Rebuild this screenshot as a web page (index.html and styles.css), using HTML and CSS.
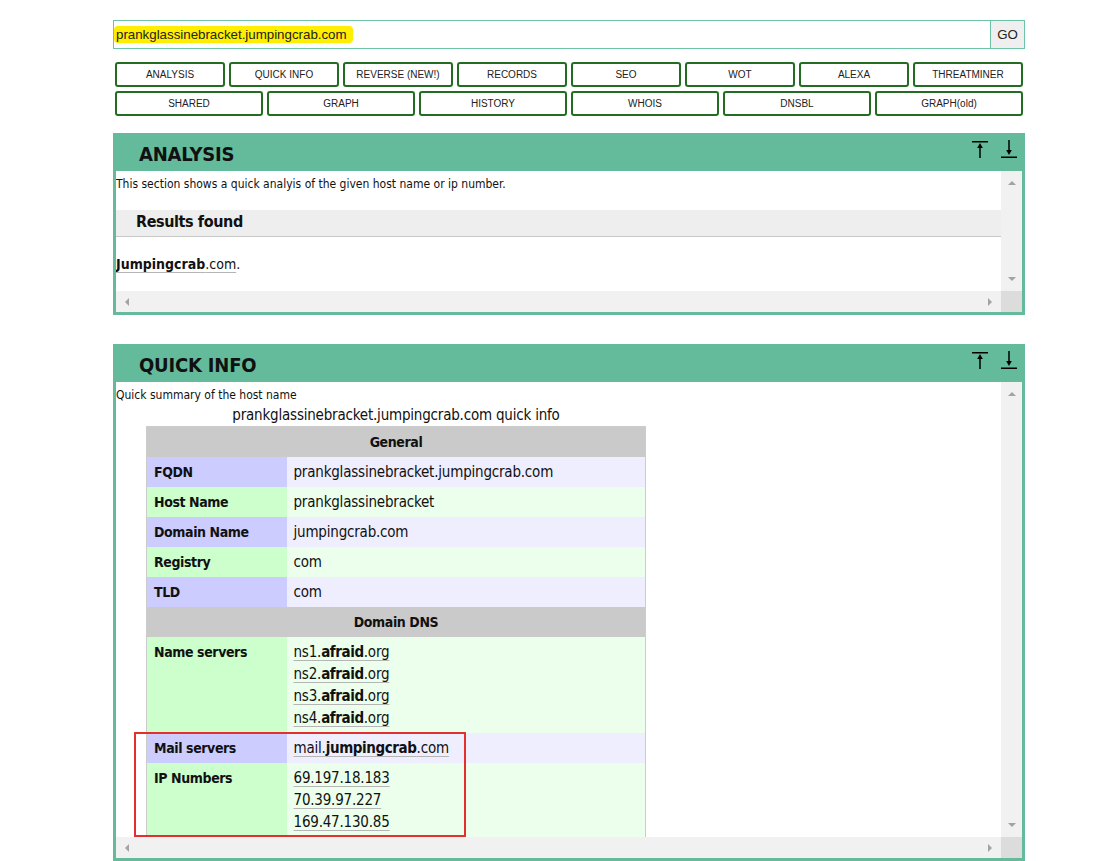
FILE: index.html
```html
<!DOCTYPE html>
<html lang="en">
<head>
<meta charset="utf-8">
<title>prankglassinebracket.jumpingcrab.com</title>
<link rel="stylesheet" href="styles.css">
</head>
<body>
<div class="page">
  <div class="search">
    <div class="search-field"><span class="hl">prankglassinebracket.jumpingcrab.com</span></div>
    <div class="go">GO</div>
  </div>
  <nav class="tabs tabs-8">
    <a class="tab">ANALYSIS</a>
    <a class="tab">QUICK INFO</a>
    <a class="tab">REVERSE (NEW!)</a>
    <a class="tab">RECORDS</a>
    <a class="tab">SEO</a>
    <a class="tab">WOT</a>
    <a class="tab">ALEXA</a>
    <a class="tab">THREATMINER</a>
  </nav>
  <nav class="tabs tabs-6">
    <a class="tab">SHARED</a>
    <a class="tab">GRAPH</a>
    <a class="tab">HISTORY</a>
    <a class="tab">WHOIS</a>
    <a class="tab">DNSBL</a>
    <a class="tab">GRAPH(old)</a>
  </nav>

  <section class="panel panel-analysis">
    <header class="panel-head">
      <h2 class="panel-title">ANALYSIS</h2>
      <div class="tools">
        <svg class="ico" width="16" height="18" viewBox="0 0 16 18"><rect x="0" y="1" width="16" height="1.5" fill="#000"/><polygon points="8,3 5.2,8 10.8,8" fill="#000"/><rect x="7.25" y="6" width="1.5" height="12" fill="#000"/></svg>
        <svg class="ico" width="16" height="18" viewBox="0 0 16 18"><rect x="7.25" y="0" width="1.5" height="12" fill="#000"/><polygon points="8,15 5.2,10 10.8,10" fill="#000"/><rect x="0" y="16.5" width="16" height="1.5" fill="#000"/></svg>
      </div>
    </header>
    <div class="panel-body">
      <div class="panel-content">
        <p class="desc">This section shows a quick analyis of the given host name or ip number.</p>
        <h3 class="band">Results found</h3>
        <p class="result"><a class="lnk"><b>Jumpingcrab</b>.com</a>.</p>
      </div>
      <div class="vscroll"><span class="arr arr-up"></span><span class="arr arr-down"></span></div>
      <div class="hscroll"><span class="arr arr-left"></span><span class="arr arr-right"></span></div>
      <div class="corner"></div>
    </div>
  </section>

  <section class="panel panel-quick">
    <header class="panel-head">
      <h2 class="panel-title">QUICK INFO</h2>
      <div class="tools">
        <svg class="ico" width="16" height="18" viewBox="0 0 16 18"><rect x="0" y="1" width="16" height="1.5" fill="#000"/><polygon points="8,3 5.2,8 10.8,8" fill="#000"/><rect x="7.25" y="6" width="1.5" height="12" fill="#000"/></svg>
        <svg class="ico" width="16" height="18" viewBox="0 0 16 18"><rect x="7.25" y="0" width="1.5" height="12" fill="#000"/><polygon points="8,15 5.2,10 10.8,10" fill="#000"/><rect x="0" y="16.5" width="16" height="1.5" fill="#000"/></svg>
      </div>
    </header>
    <div class="panel-body">
      <div class="panel-content">
        <p class="desc">Quick summary of the host name</p>
        <table class="qi">
          <caption>prankglassinebracket.jumpingcrab.com quick info</caption>
          <colgroup><col class="c-label"><col class="c-value"></colgroup>
          <tr><th colspan="2" class="grp">General</th></tr>
          <tr class="pu"><th>FQDN</th><td>prankglassinebracket.jumpingcrab.com</td></tr>
          <tr class="gr"><th>Host Name</th><td>prankglassinebracket</td></tr>
          <tr class="pu"><th>Domain Name</th><td>jumpingcrab.com</td></tr>
          <tr class="gr"><th>Registry</th><td>com</td></tr>
          <tr class="pu"><th>TLD</th><td>com</td></tr>
          <tr><th colspan="2" class="grp">Domain DNS</th></tr>
          <tr class="gr"><th>Name servers</th><td><a class="lnk">ns1.<b>afraid</b>.org</a><br><a class="lnk">ns2.<b>afraid</b>.org</a><br><a class="lnk">ns3.<b>afraid</b>.org</a><br><a class="lnk">ns4.<b>afraid</b>.org</a></td></tr>
          <tr class="pu"><th>Mail servers</th><td><a class="lnk">mail.<b>jumpingcrab</b>.com</a></td></tr>
          <tr class="gr"><th>IP Numbers</th><td><a class="lnk">69.197.18.183</a><br><a class="lnk">70.39.97.227</a><br><a class="lnk">169.47.130.85</a><br><a class="lnk">&nbsp;</a></td></tr>
        </table>
        <div class="annot"></div>
      </div>
      <div class="vscroll"><span class="arr arr-up"></span><span class="arr arr-down"></span></div>
      <div class="hscroll"><span class="arr arr-left"></span><span class="arr arr-right"></span></div>
      <div class="corner"></div>
    </div>
  </section>
</div>
</body>
</html>
```

FILE: styles.css
```css
* { box-sizing: border-box; }

html, body {
  margin: 0;
  padding: 0;
  background: #fff;
  overflow: hidden;
}

body {
  font-family: "DejaVu Sans Condensed", "DejaVu Sans", sans-serif;
  font-stretch: condensed;
  color: #111;
}

.page {
  width: 912px;
  margin-left: 113px;
  padding-top: 20px;
}

/* search bar */
.search {
  display: flex;
  height: 29px;
  border: 1px solid #6dc3a3;
}

.search-field {
  flex: 1;
  display: flex;
  align-items: center;
  font: 13.3px "Liberation Sans", Arial, sans-serif;
  color: #222;
}

.hl {
  background: #ffee00;
  border-radius: 4px;
  padding: 2px 6px 2px 2px;
  line-height: 13px;
}

.go {
  width: 34px;
  border-left: 1px solid #6dc3a3;
  background: #efefef;
  display: flex;
  align-items: center;
  justify-content: center;
  font: 13.3px "Liberation Sans", Arial, sans-serif;
  color: #222;
}

/* tab buttons */
.tabs {
  display: grid;
  gap: 4px;
  padding: 0 2px;
}

.tabs-8 {
  grid-template-columns: repeat(8, 1fr);
  margin-top: 13px;
}

.tabs-6 {
  grid-template-columns: repeat(6, 1fr);
  margin-top: 4px;
}

.tab {
  height: 25px;
  border: 2px solid #236d23;
  border-radius: 3px;
  background: #fff;
  display: flex;
  align-items: center;
  justify-content: center;
  font: 10px "Liberation Sans", Arial, sans-serif;
  color: #222;
  text-decoration: none;
}

/* panels */
.panel {
  border: 3px solid #63bb9b;
}

.panel-analysis { margin-top: 17px; }
.panel-quick { margin-top: 29px; }

.panel-head {
  height: 35px;
  background: #63bb9b;
  display: flex;
  align-items: center;
  padding: 0 5px 0 23px;
}

.panel-title {
  margin: 0;
  font-size: 20px;
  line-height: 24px;
  font-weight: bold;
  letter-spacing: -0.2px;
  color: #111;
}

.tools {
  margin-left: auto;
  align-self: flex-start;
  margin-top: 4px;
  display: flex;
  gap: 13px;
}

.ico { display: block; }

.panel-body {
  display: grid;
  grid-template-columns: 1fr 21px;
}

.panel-analysis .panel-body { grid-template-rows: 120px 21px; }
.panel-quick .panel-body { grid-template-rows: 455px 21px; }

.panel-content {
  position: relative;
  overflow: hidden;
  background: #fff;
}

.vscroll {
  background: #f1f1f1;
  display: flex;
  flex-direction: column;
  justify-content: space-between;
  align-items: center;
  padding: 10px 0;
}

.hscroll {
  background: #f1f1f1;
  display: flex;
  justify-content: space-between;
  align-items: center;
  padding: 0 9px;
}

.corner { background: #dcdcdc; }

.arr { width: 0; height: 0; display: block; }
.arr-up { border-left: 4px solid transparent; border-right: 4px solid transparent; border-bottom: 4px solid #a3a3a3; }
.arr-down { border-left: 4px solid transparent; border-right: 4px solid transparent; border-top: 4px solid #a3a3a3; }
.arr-left { border-top: 4px solid transparent; border-bottom: 4px solid transparent; border-right: 4px solid #a3a3a3; }
.arr-right { border-top: 4px solid transparent; border-bottom: 4px solid transparent; border-left: 4px solid #a3a3a3; }

/* content */
.desc {
  margin: 0;
  padding-top: 4px;
  font-size: 12px;
  line-height: 18px;
}

.band {
  margin: 17px 0 0;
  height: 27px;
  background: #eeeeee;
  border-bottom: 1px solid #c8c8c8;
  padding-left: 20px;
  font-size: 16px;
  line-height: 24px;
  font-weight: bold;
  letter-spacing: -0.4px;
}

.result {
  margin: 17px 0 0;
  font-size: 14px;
  line-height: 20px;
}

.lnk {
  color: inherit;
  text-decoration: underline;
  text-decoration-color: #b5b5b5;
  text-decoration-thickness: 1px;
  text-underline-offset: 3px;
  text-decoration-skip-ink: none;
}

/* quick info table */
.qi {
  margin-left: 30px;
  width: 500px;
  border-collapse: collapse;
  table-layout: fixed;
  border: 1px solid #cccccc;
  font-size: 15px;
  line-height: 22px;
  letter-spacing: -0.2px;
}

.qi caption {
  caption-side: top;
  text-align: center;
  font-size: 15px;
  line-height: 22px;
}

.c-label { width: 140px; }

.qi th, .qi td {
  padding: 4px 7px;
  vertical-align: top;
  text-align: left;
}

.qi th {
  font-weight: bold;
  font-size: 14px;
  letter-spacing: -0.4px;
}

.qi td b { letter-spacing: -0.4px; }

.qi th.grp {
  background: #cacaca;
  text-align: center;
}

.pu th { background: #ccccff; }
.pu td { background: #eeeeff; }
.gr th { background: #ccffcc; }
.gr td { background: #ecffec; }

.annot {
  position: absolute;
  left: 18px;
  top: 350px;
  width: 332px;
  height: 105px;
  border: 2px solid #e3302f;
}
```
